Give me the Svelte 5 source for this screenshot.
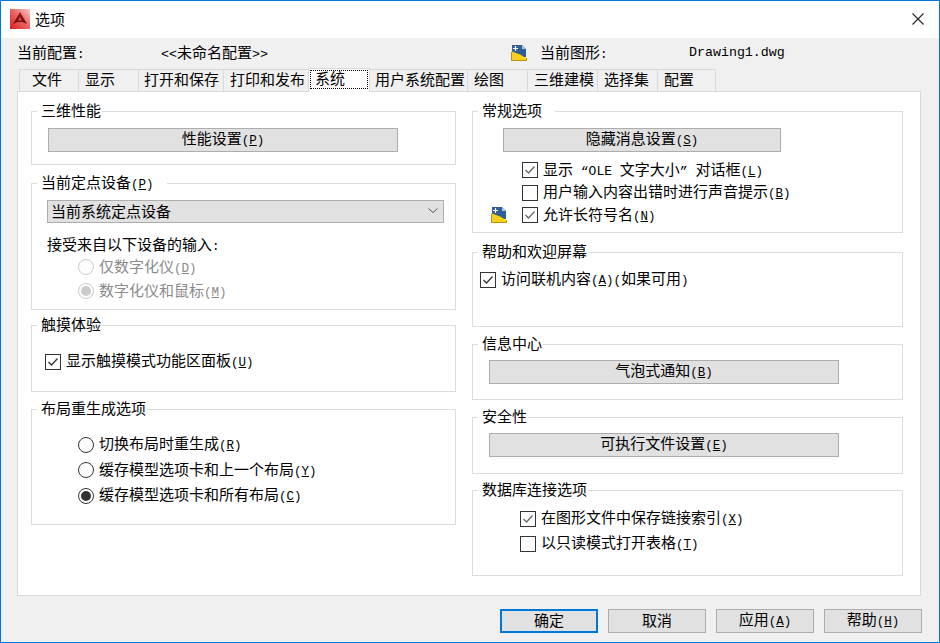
<script lang="ts">
  const tabs = [
    { label: '文件', w: 60, pad: 12 },
    { label: '显示', w: 60, pad: 6 },
    { label: '打开和保存', w: 85, pad: 5 },
    { label: '打印和发布', w: 85, pad: 6 },
    { label: '系统', w: 62, pad: 7, active: true },
    { label: '用户系统配置', w: 98, pad: 5 },
    { label: '绘图', w: 60, pad: 6 },
    { label: '三维建模', w: 70, pad: 6 },
    { label: '选择集', w: 60, pad: 6 },
    { label: '配置', w: 58, pad: 6 },
  ];
</script>

{#snippet mn(text: string, key: string)}{text}<span class="lat">(<u>{key}</u>)</span>{/snippet}

{#snippet check(on: boolean, dark = false)}
  <span class="box">
    {#if on}
      <svg width="14" height="14" viewBox="0 0 14 14"><path d="M2.5 7 L5.5 10 L11.5 3.5" fill="none" stroke={dark ? '#333' : '#666'} stroke-width="1.3" /></svg>
    {/if}
  </span>
{/snippet}

{#snippet radio(on: boolean, off = false)}
  <span class="radio" class:off class:on></span>
{/snippet}

{#snippet docIcon()}
  <svg class="doc" width="16" height="16" viewBox="0 0 16 16">
    <path d="M1 0 H11 L15 4 V12 H1 Z" fill="#2f5f93" />
    <path d="M11 0 L15 4 H11 Z" fill="#b4c5d6" />
    <path d="M4.5 1 V6 M2 3.5 H7" stroke="#fff" stroke-width="1.2" />
    <path d="M1 6.5 L9 9.5 L15 13 V16 H0 V6.5 Z" fill="#f7d21c" />
    <path d="M0.5 7 V15.5 H15.5 V13" fill="none" stroke="#b98f10" />
  </svg>
{/snippet}

<div class="dialog">
  <header class="titlebar">
    <svg class="logo" width="20" height="20" viewBox="0 0 20 20">
      <defs>
        <linearGradient id="logo-bg" x1="0" y1="1" x2="1" y2="0">
          <stop offset="0" stop-color="#dc1f1f" />
          <stop offset="0.55" stop-color="#ea6a6a" />
          <stop offset="1" stop-color="#f6c9c9" />
        </linearGradient>
        <linearGradient id="logo-a" x1="0" y1="0" x2="0" y2="1">
          <stop offset="0" stop-color="#a81a1a" />
          <stop offset="1" stop-color="#650b0b" />
        </linearGradient>
      </defs>
      <rect width="20" height="20" fill="url(#logo-bg)" />
      <path d="M10 3 L17 15 L12.5 13 H7.5 L3 15 Z" fill="url(#logo-a)" />
      <path d="M10 8 L12 11.5 H8 Z" fill="#d9504f" />
    </svg>
    <span class="title">选项</span>
    <svg class="close" width="12" height="12" viewBox="0 0 12 12"><path d="M0.5 0.5 L11.5 11.5 M11.5 0.5 L0.5 11.5" stroke="#222" stroke-width="1.1" /></svg>
  </header>

  <div class="body">
    <div class="info">
      <span class="info-a">当前配置<span class="lat">:</span></span>
      <span class="info-b"><span class="file">&lt;&lt;</span>未命名配置<span class="file">&gt;&gt;</span></span>
      <span class="info-icon">{@render docIcon()}</span>
      <span class="info-c">当前图形<span class="lat">:</span></span>
      <span class="file">Drawing1.dwg</span>
    </div>

    <div class="tabs">
      {#each tabs as t}
        <div class="tab" class:active={t.active} style="width:{t.w}px;padding-left:{t.pad}px">
          {#if t.active}<span class="focus">{t.label}</span>{:else}{t.label}{/if}
        </div>
      {/each}
    </div>

    <div class="panel">
      <div class="col col-left">
        <section class="group g-3d">
          <div class="legend">三维性能</div>
          <button class="btn perf">{@render mn('性能设置', 'P')}</button>
        </section>

        <section class="group g-pointer">
          <div class="legend wide">{@render mn('当前定点设备', 'P')}</div>
          <div class="select">
            <span>当前系统定点设备</span>
            <svg width="10" height="5" viewBox="0 0 10 5"><path d="M0.5 0.5 L5 4.5 L9.5 0.5" fill="none" stroke="#555" /></svg>
          </div>
          <div class="accept">接受来自以下设备的输入<span class="lat">:</span></div>
          <div class="row radio-row dim">{@render radio(false, true)}<span>{@render mn('仅数字化仪', 'D')}</span></div>
          <div class="row radio-row dim">{@render radio(true, true)}<span>{@render mn('数字化仪和鼠标', 'M')}</span></div>
        </section>

        <section class="group g-touch">
          <div class="legend">触摸体验</div>
          <div class="row">{@render check(true, true)}<span>{@render mn('显示触摸模式功能区面板', 'U')}</span></div>
        </section>

        <section class="group g-layout">
          <div class="legend">布局重生成选项</div>
          <div class="row radio-row">{@render radio(false)}<span>{@render mn('切换布局时重生成', 'R')}</span></div>
          <div class="row radio-row">{@render radio(false)}<span>{@render mn('缓存模型选项卡和上一个布局', 'Y')}</span></div>
          <div class="row radio-row">{@render radio(true)}<span>{@render mn('缓存模型选项卡和所有布局', 'C')}</span></div>
        </section>
      </div>

      <div class="col col-right">
        <section class="group g-general">
          <div class="legend wide">常规选项</div>
          <button class="btn hide">{@render mn('隐藏消息设置', 'S')}</button>
          <div class="checks">
            <div class="row">{@render check(true)}<span>显示<span class="lat ole">&nbsp;“OLE&nbsp;</span>文字大小<span class="lat ole">”&nbsp;</span>对话框{@render mn('', 'L')}</span></div>
            <div class="row">{@render check(false)}<span>{@render mn('用户输入内容出错时进行声音提示', 'B')}</span></div>
            <div class="row">
              <span class="row-icon">{@render docIcon()}</span>
              {@render check(true)}<span>{@render mn('允许长符号名', 'N')}</span>
            </div>
          </div>
        </section>

        <section class="group g-help">
          <div class="legend">帮助和欢迎屏幕</div>
          <div class="row">{@render check(true, true)}<span>{@render mn('访问联机内容', 'A')}<span class="lat">(</span>如果可用<span class="lat">)</span></span></div>
        </section>

        <section class="group g-info">
          <div class="legend">信息中心</div>
          <button class="btn wide-btn">{@render mn('气泡式通知', 'B')}</button>
        </section>

        <section class="group g-sec">
          <div class="legend">安全性</div>
          <button class="btn wide-btn">{@render mn('可执行文件设置', 'E')}</button>
        </section>

        <section class="group g-db">
          <div class="legend">数据库连接选项</div>
          <div class="row">{@render check(true)}<span>{@render mn('在图形文件中保存链接索引', 'X')}</span></div>
          <div class="row">{@render check(false)}<span>{@render mn('以只读模式打开表格', 'T')}</span></div>
        </section>
      </div>
    </div>

    <footer class="footer">
      <button class="btn foot primary">确定</button>
      <button class="btn foot">取消</button>
      <button class="btn foot">{@render mn('应用', 'A')}</button>
      <button class="btn foot">{@render mn('帮助', 'H')}</button>
    </footer>
  </div>
</div>

<style>
  :global(body) {
    margin: 0;
    background: #fff;
  }

  .dialog {
    width: 940px;
    height: 643px;
    box-sizing: border-box;
    border: 1px solid #0078d7;
    display: flex;
    flex-direction: column;
    font-family: 'Noto Sans CJK SC', sans-serif;
    font-size: 15px;
    line-height: 20px;
    color: #000;
    background: #f0f0f0;
  }

  .lat {
    font-family: 'Liberation Mono', monospace;
    font-size: 12.5px;
  }

  .ole {
    font-size: 13px;
  }

  .titlebar {
    height: 37px;
    flex: none;
    background: #fff;
    display: flex;
    align-items: center;
  }

  .logo {
    margin: -1px 0 0 9px;
  }

  .title {
    margin-left: 5px;
    margin-top: -2px;
    font-size: 15px;
  }

  .close {
    margin-left: auto;
    margin-right: 15px;
    margin-top: -1px;
  }

  .body {
    flex: 1;
    display: flex;
    flex-direction: column;
    min-height: 0;
  }

  .info {
    height: 30px;
    flex: none;
    display: flex;
    align-items: center;
    padding-left: 16px;
  }

  .info-a { width: 144px; }
  .info-b { width: 350px; }
  .info-icon { width: 29px; display: flex; }
  .info-c { width: 149px; }

  .file {
    font-family: 'Liberation Mono', monospace;
    font-size: 13.3px;
  }

  .doc { display: block; }

  .tabs {
    height: 23px;
    flex: none;
    display: flex;
    align-items: flex-end;
    padding-left: 18px;
    position: relative;
    z-index: 1;
  }

  .tab {
    height: 22px;
    box-sizing: border-box;
    border: 1px solid #d9d9d9;
    border-left-width: 0;
    border-bottom-width: 0;
    background: #f0f0f0;
    line-height: 18px;
    white-space: nowrap;
  }

  .tab:first-child {
    border-left-width: 1px;
  }

  .tab.active {
    height: 24px;
    margin-bottom: -1px;
    background: #fff;
    border-left-width: 1px;
    margin-left: -1px;
    padding-top: 1px;
    position: relative;
  }

  .focus {
    display: block;
    margin: 0 0 0 -6px;
    padding-left: 5px;
    height: 19px;
    line-height: 16px;
    width: 53px;
    outline: 1px dotted #000;
    outline-offset: -1px;
  }

  .panel {
    height: 505px;
    flex: none;
    box-sizing: border-box;
    margin-left: 16px;
    width: 904px;
    background: #fff;
    border: 1px solid #d9d9d9;
    padding: 19px 0 0 13px;
    display: flex;
    gap: 16px;
  }

  .col-left { width: 425px; flex: none; }
  .col-right { width: 431px; flex: none; }

  .group {
    position: relative;
    box-sizing: border-box;
    border: 1px solid #dcdcdc;
  }

  .legend {
    position: absolute;
    top: -12px;
    left: 5px;
    padding: 0 1px 0 4px;
    height: 20px;
    background: #fff;
    white-space: nowrap;
  }

  .legend.wide { padding-right: 13px; }

  .btn {
    display: block;
    box-sizing: border-box;
    height: 24px;
    padding: 0 0 3px;
    border: 1px solid #adadad;
    background: #e1e1e1;
    font: inherit;
    line-height: 18px;
    color: inherit;
    text-align: center;
  }

  .row {
    display: flex;
    align-items: center;
    gap: 5px;
    white-space: nowrap;
  }

  .box {
    width: 16px;
    height: 16px;
    flex: none;
    box-sizing: border-box;
    border: 1px solid #333;
    background: #fff;
    display: flex;
    align-items: center;
    justify-content: center;
  }

  .radio {
    width: 16px;
    height: 16px;
    flex: none;
    box-sizing: border-box;
    border: 1px solid #333;
    border-radius: 50%;
    background: #fff;
    display: flex;
    align-items: center;
    justify-content: center;
  }

  .radio.on::after {
    content: '';
    width: 10px;
    height: 10px;
    border-radius: 50%;
    background: #333;
  }

  .radio.off { border-color: #ccc; }
  .radio.off.on::after { background: #ccc; }

  .dim { color: #8a8a8a; }

  .radio-row { margin-left: 46px; }

  /* left column */
  .g-3d { height: 54px; padding: 16px 0 0 16px; }
  .perf { width: 350px; }

  .g-pointer { height: 127px; margin-top: 18px; padding: 16px 0 0 15px; }

  .select {
    width: 397px;
    height: 23px;
    box-sizing: border-box;
    border: 1px solid #adadad;
    background: #e1e1e1;
    padding: 0 5px 2px 3px;
    display: flex;
    align-items: center;
    justify-content: space-between;
  }

  .accept { margin-top: 10px; height: 22px; line-height: 22px; }
  .g-pointer .radio-row { height: 24px; margin-left: 31px; }

  .g-touch { height: 67px; margin-top: 15px; padding: 24px 0 0 13px; }

  .g-layout { height: 116px; margin-top: 17px; padding: 22px 0 0 0; }
  .g-layout .radio-row { height: 25.5px; }

  /* right column */
  .g-general { height: 122px; padding: 16px 0 0 30px; }
  .hide { width: 278px; }
  .checks { margin: 7px 0 0 19px; position: relative; }
  .checks .row { height: 22.5px; }
  .row-icon { position: absolute; left: -31px; }

  .g-help { height: 75px; margin-top: 19px; padding: 15px 0 0 7px; }

  .g-info { height: 56px; margin-top: 17px; padding: 15px 0 0 16px; }
  .g-sec { height: 57px; margin-top: 17px; padding: 15px 0 0 16px; }
  .wide-btn { width: 350px; }

  .g-db { height: 86px; margin-top: 16px; padding: 15px 0 0 47px; }
  .g-db .row { height: 25px; }

  .footer {
    flex: 1;
    display: flex;
    gap: 10px;
    padding: 13px 0 0 499px;
  }

  .foot { width: 98px; }
  .primary { border: 2px solid #0078d7; }
</style>
